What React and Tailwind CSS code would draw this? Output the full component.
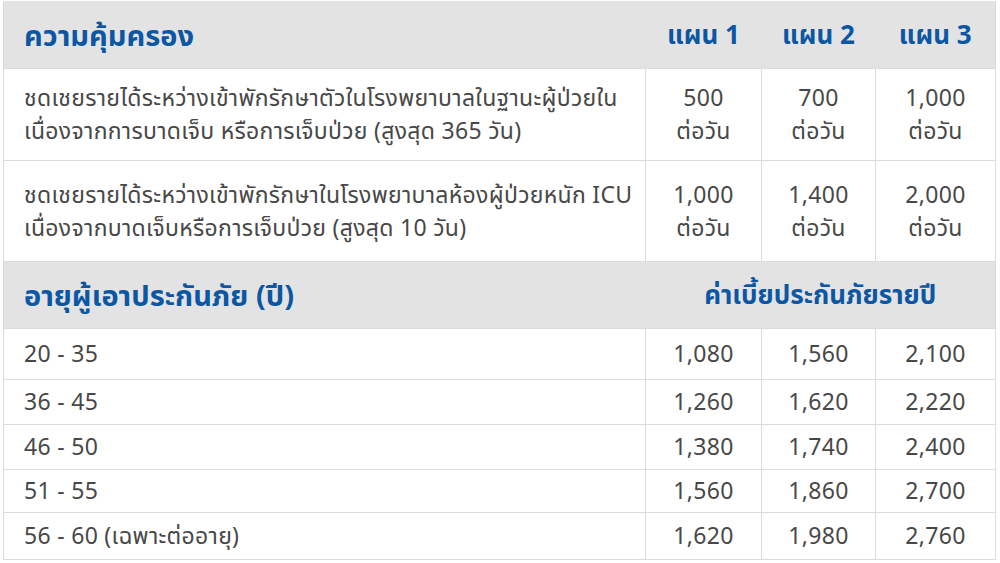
const coverage = [
  {
    label: ["ชดเชยรายได้ระหว่างเข้าพักรักษาตัวในโรงพยาบาลในฐานะผู้ป่วยใน", "เนื่องจากการบาดเจ็บ หรือการเจ็บป่วย (สูงสุด 365 วัน)"],
    plans: ["500", "700", "1,000"],
    h: "h-[92px]",
  },
  {
    label: ["ชดเชยรายได้ระหว่างเข้าพักรักษาในโรงพยาบาลห้องผู้ป่วยหนัก ICU", "เนื่องจากบาดเจ็บหรือการเจ็บป่วย (สูงสุด 10 วัน)"],
    plans: ["1,000", "1,400", "2,000"],
    h: "h-[101px]",
  },
];

const premiums = [
  { age: "20 - 35", plans: ["1,080", "1,560", "2,100"], h: "h-[51px]" },
  { age: "36 - 45", plans: ["1,260", "1,620", "2,220"], h: "h-[45px]" },
  { age: "46 - 50", plans: ["1,380", "1,740", "2,400"], h: "h-[45px]" },
  { age: "51 - 55", plans: ["1,560", "1,860", "2,700"], h: "h-[43px]" },
  { age: "56 - 60 (เฉพาะต่ออายุ)", plans: ["1,620", "1,980", "2,760"], h: "h-[47px]" },
];

export default function App() {
  return (
    <div className="w-[1000px] h-[563px] bg-white pl-[3px] pt-px font-['Noto_Sans','Noto_Sans_Thai',sans-serif] text-[#484848]">
      <table className="w-[992px] table-fixed border-collapse text-[23px] leading-[33px] tracking-[0.3px]">
        <colgroup>
          <col className="w-[642px]" />
          <col className="w-[116px]" />
          <col className="w-[114px]" />
          <col className="w-[120px]" />
        </colgroup>
        <tbody>
          <tr className="h-[67px] bg-[#e3e3e3] text-[#0b57a4] font-bold text-[26px] tracking-normal">
            <td className="pl-[20px] text-[29px] border-l border-[#d9d9d9]">ความคุ้มครอง</td>
            <td className="text-center">แผน 1</td>
            <td className="text-center">แผน 2</td>
            <td className="text-center border-r border-[#d9d9d9]">แผน 3</td>
          </tr>
          {coverage.map((row, i) => (
            <tr key={i} className={row.h}>
              <td className="pl-[20px] border border-[#dcdcdc]">
                {row.label[0]}
                <br />
                {row.label[1]}
              </td>
              {row.plans.map((p, j) => (
                <td key={j} className="text-center border border-[#dcdcdc]">
                  {p}
                  <br />
                  ต่อวัน
                </td>
              ))}
            </tr>
          ))}
          <tr className="h-[67px] bg-[#e3e3e3] text-[#0b57a4] font-bold text-[26px] tracking-normal">
            <td className="pl-[20px] text-[29px] border-l border-[#d9d9d9]">อายุผู้เอาประกันภัย (ปี)</td>
            <td colSpan={3} className="text-center border-r border-[#d9d9d9]">
              ค่าเบี้ยประกันภัยรายปี
            </td>
          </tr>
          {premiums.map((row, i) => (
            <tr key={i} className={row.h}>
              <td className="pl-[20px] border border-[#dcdcdc]">{row.age}</td>
              {row.plans.map((p, j) => (
                <td key={j} className="text-center border border-[#dcdcdc]">
                  {p}
                </td>
              ))}
            </tr>
          ))}
        </tbody>
      </table>
    </div>
  );
}
